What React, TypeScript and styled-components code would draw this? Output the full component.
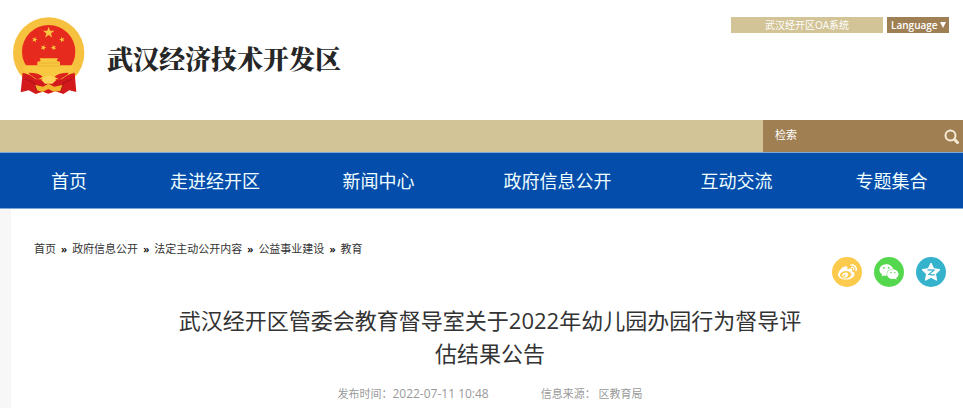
import React from "react";
import styled, { createGlobalStyle } from "styled-components";
import { FaWeibo, FaWeixin } from "react-icons/fa";

const GlobalStyle = createGlobalStyle`
  * { box-sizing: border-box; }
  body {
    margin: 0;
    background: #fff;
    color: #333;
    font-family: "Open Sans", "Noto Sans CJK SC", sans-serif;
  }
  a { color: inherit; text-decoration: none; }
`;

const Header = styled.header`
  display: flex;
  justify-content: space-between;
  align-items: flex-start;
  height: 120px;
  padding: 17px 14px 0 12px;
`;

const Brand = styled.a`
  display: flex;
  align-items: center;
  gap: 21px;
`;

const BrandName = styled.span`
  font: 900 26px/36px "Noto Serif CJK SC", "Noto Sans CJK SC", serif;
  color: #262626;
  padding-top: 4px;
`;

const Tools = styled.div`
  display: flex;
  gap: 4px;
`;

const OaLink = styled.a`
  width: 152px;
  background: #d2c496;
  color: #fff;
  font-size: 10px;
  line-height: 16px;
  text-align: center;
`;

const LanguageButton = styled.button`
  display: flex;
  align-items: center;
  justify-content: space-between;
  width: 62px;
  height: 16px;
  padding: 0 3px 0 4px;
  border: 0;
  background: #9f7f54;
  color: #fff;
  font: 600 10px/16px "Open Sans", sans-serif;
`;

const SearchStrip = styled.div`
  display: flex;
  justify-content: flex-end;
  height: 32px;
  background: #d2c496;
`;

const SearchForm = styled.form`
  display: flex;
  align-items: center;
  width: 200px;
  padding: 0 4px 0 12px;
  background: #a07f53;
`;

const SearchInput = styled.input`
  flex: 1;
  min-width: 0;
  padding: 0 0 4px;
  border: 0;
  outline: 0;
  background: transparent;
  color: #fff;
  font: 11px/16px "Noto Sans CJK SC", sans-serif;
  &::placeholder { color: #fff; opacity: 1; }
`;

const SearchButton = styled.button`
  display: flex;
  padding: 0;
  border: 0;
  background: none;
`;

const Nav = styled.nav`
  display: grid;
  grid-template-columns: 138fr 154fr 173fr 185fr 173fr 137fr;
  padding: 1px 3px 0 0;
  border-top: 1px solid #7aa7d4;
  border-bottom: 1px solid #7aa7d4;
  background: #044dab;
`;

const NavLink = styled.a`
  color: #f0ffff;
  font-size: 18px;
  line-height: 54px;
  text-align: center;
  white-space: nowrap;
`;

const Page = styled.div`
  padding: 4px 0 0 11px;
  background: linear-gradient(to right, #f7f7f7 11px, #fff 11px);
`;

const Article = styled.main`
  padding: 28px 17px 8px 23px;
`;

const Breadcrumb = styled.nav`
  display: flex;
  gap: 5px;
  font-size: 11px;
  line-height: 16px;
`;

const Separator = styled.span`
  color: #000;
  font-weight: 600;
`;

const ShareList = styled.div`
  display: flex;
  justify-content: flex-end;
  gap: 12px;
`;

const ShareButton = styled.button<{ $color: string }>`
  display: flex;
  align-items: center;
  justify-content: center;
  width: 30px;
  height: 30px;
  padding: 0;
  border: 0;
  border-radius: 50%;
  background: ${(p) => p.$color};
  color: #fff;
`;

const Title = styled.h1`
  max-width: 640px;
  margin: 17px auto 16px;
  font-size: 22px;
  font-weight: 400;
  line-height: 33px;
  text-align: center;
`;

const Meta = styled.div`
  display: flex;
  justify-content: center;
  gap: 52px;
  color: #999;
  font-size: 11px;
  line-height: 16px;
`;

const PublishTime = styled.time`
  font-size: 12px;
`;

const star = (cx: number, cy: number, r: number, turn = 0) =>
  Array.from({ length: 10 }, (_, i) => {
    const radius = i % 2 ? r * 0.4 : r;
    const angle = ((i * 36 - 90 + turn) * Math.PI) / 180;
    return `${cx + radius * Math.cos(angle)},${cy + radius * Math.sin(angle)}`;
  }).join(" ");

const Emblem = () => (
  <svg width="74" height="78" viewBox="36 23 222 234" role="img" aria-label="国徽">
    <circle cx="146" cy="131" r="107" fill="#f6c13f" />
    <circle cx="146" cy="127" r="80" fill="#e72a1e" />
    <path d="M68 190 62 249 86 243 107 254 128 247 145 253 167 246 190 254 208 243 229 248 224 190 190 201 146 212 102 201Z" fill="#d3191c" />
    <g fill="#f8c840">
      <polygon points={star(146, 70, 18)} />
      <polygon points={star(104, 91, 9, 15)} />
      <polygon points={star(186, 91, 9, -15)} />
      <polygon points={star(130, 115, 9, 20)} />
      <polygon points={star(161, 115, 9, -20)} />
      <path d="m119 147 3 8-10 2v11H76l-6 12 12 12 25 18h78l26-18 10-12-7-12h-34v-11l-10-2 4-8Z" />
    </g>
    <path d="M117 161h59M112 170h68" stroke="#e9a934" strokeWidth="2" />
    <path d="M86 190q31 0 42 12l-16 9-22-15Zm120 0q-31 0-42 12l15 9 23-15Z" fill="#dd211d" />
    <path d="M124 212q22-26 45 0l-12 11h-22Z" fill="#ffd35a" />
    <path d="m103 226 26 6 16-9 18 9 27-6-7 18-22 3-16-8-17 9-18-5Z" fill="#f2b62e" />
    <path d="m77 210 25 10 9 26m105-36-25 10-9 26" stroke="#a91216" strokeWidth="3" fill="none" />
  </svg>
);

const SearchIcon = () => (
  <svg width="15" height="15" viewBox="0 0 15 15" fill="none" stroke="#f5ead5" aria-hidden="true">
    <circle cx="6.5" cy="6.5" r="5" strokeWidth="2" />
    <path d="m10.5 10.5 3 3" strokeWidth="3" strokeLinecap="round" />
  </svg>
);

const QzoneIcon = () => (
  <svg width="22" height="22" viewBox="0 0 22 22" aria-hidden="true">
    <polygon points="11,2 13.8,7.7 20,8.6 15.5,13 16.6,19.3 11,16.3 5.4,19.3 6.5,13 2,8.6 8.2,7.7" fill="#fff" stroke="#fff" strokeWidth="1" strokeLinejoin="round" />
    <path d="M7.5 9.2q3.5-.7 6.5 0l-5.2 4.2q3 .8 6 .2" fill="none" stroke="#35b2cc" strokeWidth="1.2" />
  </svg>
);

const navItems = ["首页", "走进经开区", "新闻中心", "政府信息公开", "互动交流", "专题集合"];
const crumbs = ["首页", "政府信息公开", "法定主动公开内容", "公益事业建设", "教育"];

export default function App() {
  return (
    <>
      <GlobalStyle />
      <Header>
        <Brand href="#">
          <Emblem />
          <BrandName>武汉经济技术开发区</BrandName>
        </Brand>
        <Tools>
          <OaLink href="#">武汉经开区OA系统</OaLink>
          <LanguageButton type="button">
            <span>Language</span>
            <svg width="6" height="6" viewBox="0 0 6 6" aria-hidden="true">
              <path d="M0 0h6L3 6Z" fill="#fff" />
            </svg>
          </LanguageButton>
        </Tools>
      </Header>
      <SearchStrip>
        <SearchForm role="search">
          <SearchInput type="text" placeholder="检索" aria-label="检索" />
          <SearchButton type="button" aria-label="检索">
            <SearchIcon />
          </SearchButton>
        </SearchForm>
      </SearchStrip>
      <Nav>
        {navItems.map((item) => (
          <NavLink key={item} href="#">{item}</NavLink>
        ))}
      </Nav>
      <Page>
        <Article>
          <Breadcrumb aria-label="当前位置">
            {crumbs.map((crumb, i) => (
              <React.Fragment key={crumb}>
                {i > 0 && <Separator>»</Separator>}
                <a href="#">{crumb}</a>
              </React.Fragment>
            ))}
          </Breadcrumb>
          <ShareList>
            <ShareButton type="button" aria-label="微博" $color="#fcca4c"><FaWeibo size={19} /></ShareButton>
            <ShareButton type="button" aria-label="微信" $color="#55d74e"><FaWeixin size={20} /></ShareButton>
            <ShareButton type="button" aria-label="QQ空间" $color="#35b2cc"><QzoneIcon /></ShareButton>
          </ShareList>
          <Title>武汉经开区管委会教育督导室关于2022年幼儿园办园行为督导评估结果公告</Title>
          <Meta>
            <span>发布时间：<PublishTime>2022-07-11 10:48</PublishTime></span>
            <span>信息来源： 区教育局</span>
          </Meta>
        </Article>
      </Page>
    </>
  );
}
